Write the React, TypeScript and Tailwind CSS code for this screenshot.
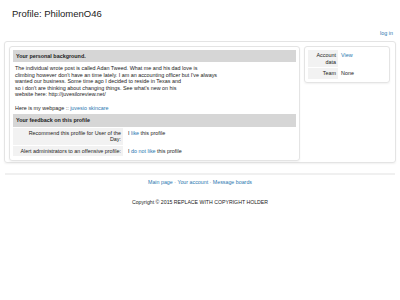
import React from "react";

export default function App() {
  return (
    <div
      className="w-[400px] h-[300px] bg-white text-[#222]"
      style={{ fontFamily: '"Liberation Sans", Arial, sans-serif' }}
    >
      <div className="pl-[12px] pt-[8px] text-[9.5px] leading-[12px]">Profile: PhilomenO46</div>
      <div className="flex justify-end pr-[7px] pt-[10px] text-[5.4px] leading-[7px] text-[#2a77b0]">
        log in
      </div>
      <div className="mx-[4px] mt-[4px] h-[122px] rounded-[3px] border border-[#e4e4e4] p-[4px] shadow-[0_1px_2px_rgba(0,0,0,0.06)]">
        <div className="flex gap-[4px] items-start">
          <div className="w-[291px] rounded-[3px] border border-[#e4e4e4] p-[3px] pb-[4px] shadow-[0_1px_2px_rgba(0,0,0,0.06)] text-[5.4px] leading-[6.5px]">
            <div className="bg-[#d6d6d6] px-[3px] h-[12px] flex items-center font-bold">Your personal background.</div>
            <div className="px-[2px] pt-[3px]">
              <div>The individual wrote post is called Adan Tweed. What me and his dad love is</div>
              <div>climbing however don't have an time lately. I am an accounting officer but I've always</div>
              <div>wanted our business. Some time ago I decided to reside in Texas and</div>
              <div>so i don't are thinking about changing things. See what's new on his</div>
              <div>website here: http://juvesiloreview.net/</div>
              <div className="h-[6.5px]"></div>
              <div className="pt-[1px]">
                Here is my webpage :: <span className="text-[#2a77b0]">juvesio skincare</span>
              </div>
            </div>
            <div className="mt-[2px] bg-[#d6d6d6] px-[3px] h-[13px] flex items-center font-bold">Your feedback on this profile</div>
            <div className="mt-[1px] grid grid-cols-[110px_1fr] gap-y-[1px]">
              <div className="bg-[#f2f2f2] text-right pr-[2px] py-[2px]">
                Recommend this profile for User of the
                <br />
                Day:
              </div>
              <div className="pl-[5px] py-[2px]">
                I <span className="text-[#2a77b0]">like</span> this profile
              </div>
              <div className="bg-[#f2f2f2] text-right pr-[2px] py-[2px]">Alert administrators to an offensive profile:</div>
              <div className="pl-[5px] py-[2px]">
                I <span className="text-[#2a77b0]">do not like</span> this profile
              </div>
            </div>
          </div>
          <div className="w-[86px] rounded-[3px] border border-[#e4e4e4] p-[3px] shadow-[0_1px_2px_rgba(0,0,0,0.06)] text-[5.4px] leading-[6.5px]">
            <div className="grid grid-cols-[30px_1fr] gap-y-[1px]">
              <div className="bg-[#f2f2f2] text-right pr-[2px] py-[2px]">
                Account
                <br />
                data
              </div>
              <div className="pl-[3px] py-[2px] text-[#2a77b0]">View</div>
              <div className="bg-[#f2f2f2] text-right pr-[2px] py-[2px]">Team</div>
              <div className="pl-[3px] py-[2px]">None</div>
            </div>
          </div>
        </div>
      </div>
      <div className="mx-[5px] mt-[10px] h-[2px] bg-[#f0f0f0]"></div>
      <div className="mt-[4px] text-center text-[5.3px] leading-[7px] text-[#2a77b0]">
        Main page <span className="text-[#888]">·</span> Your account <span className="text-[#888]">·</span> Message boards
      </div>
      <div className="mt-[13px] text-center text-[5.2px] leading-[7px]">Copyright © 2015 REPLACE WITH COPYRIGHT HOLDER</div>
    </div>
  );
}
